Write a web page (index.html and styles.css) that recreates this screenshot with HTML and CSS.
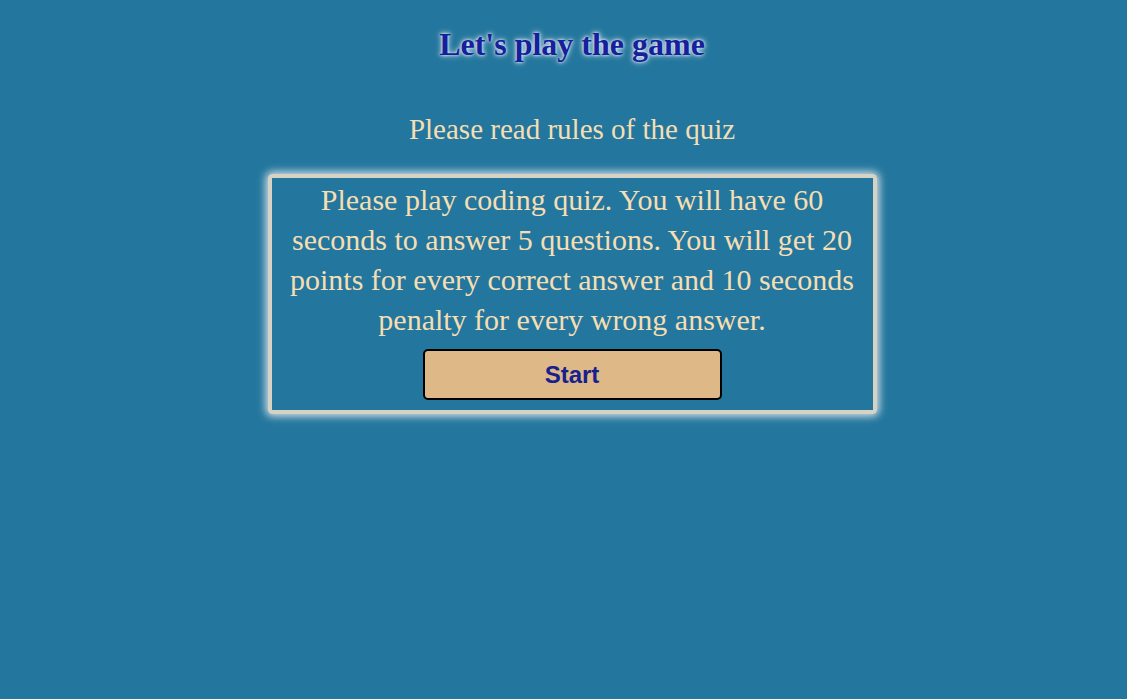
FILE: index.html
```html
<!DOCTYPE html>
<html>
<head>
<meta charset="utf-8">
<link rel="stylesheet" href="styles.css">
</head>
<body>
<main class="page">
  <h1 class="title">Let's play the game</h1>
  <h2 class="subtitle">Please read rules of the quiz</h2>
  <section class="rules">
    <p class="rules-text">Please play coding quiz. You will have 60 seconds to answer 5 questions. You will get 20 points for every correct answer and 10 seconds penalty for every wrong answer.</p>
    <button class="start-btn">Start</button>
  </section>
</main>
</body>
</html>
```
FILE: styles.css
```css
html, body {
  margin: 0;
  padding: 0;
  background: #23769d;
  height: 100%;
}
body {
  font-family: "Liberation Serif", "Times New Roman", serif;
}
.page {
  padding: 26px 0 0 17px;
  display: flex;
  flex-direction: column;
  align-items: center;
}
.title {
  margin: 0;
  font-size: 32px;
  line-height: 36px;
  font-weight: bold;
  color: #16209a;
  text-shadow: 0 0 6px #f0f8ff, 0 0 3px #ffffff;
}
.subtitle {
  margin: 50px 0 0;
  font-size: 29px;
  line-height: 34px;
  font-weight: normal;
  color: #f5deb3;
}
.rules {
  margin-top: 28px;
  width: 609px;
  box-sizing: border-box;
  border: 4px solid #d6d2c4;
  border-radius: 4px;
  box-shadow: 0 0 8px 2px #e0e8ec;
  padding: 2px 16px 10px;
  display: flex;
  flex-direction: column;
  align-items: center;
}
.rules-text {
  margin: 0;
  font-size: 30px;
  line-height: 40px;
  color: #f5deb3;
  text-align: center;
}
.start-btn {
  margin-top: 9px;
  width: 299px;
  height: 51px;
  background: #deb887;
  border: 2px solid #000;
  border-radius: 5px;
  font-family: "Liberation Sans", Arial, sans-serif;
  font-weight: bold;
  font-size: 24px;
  color: #16218f;
  cursor: pointer;
}
```
